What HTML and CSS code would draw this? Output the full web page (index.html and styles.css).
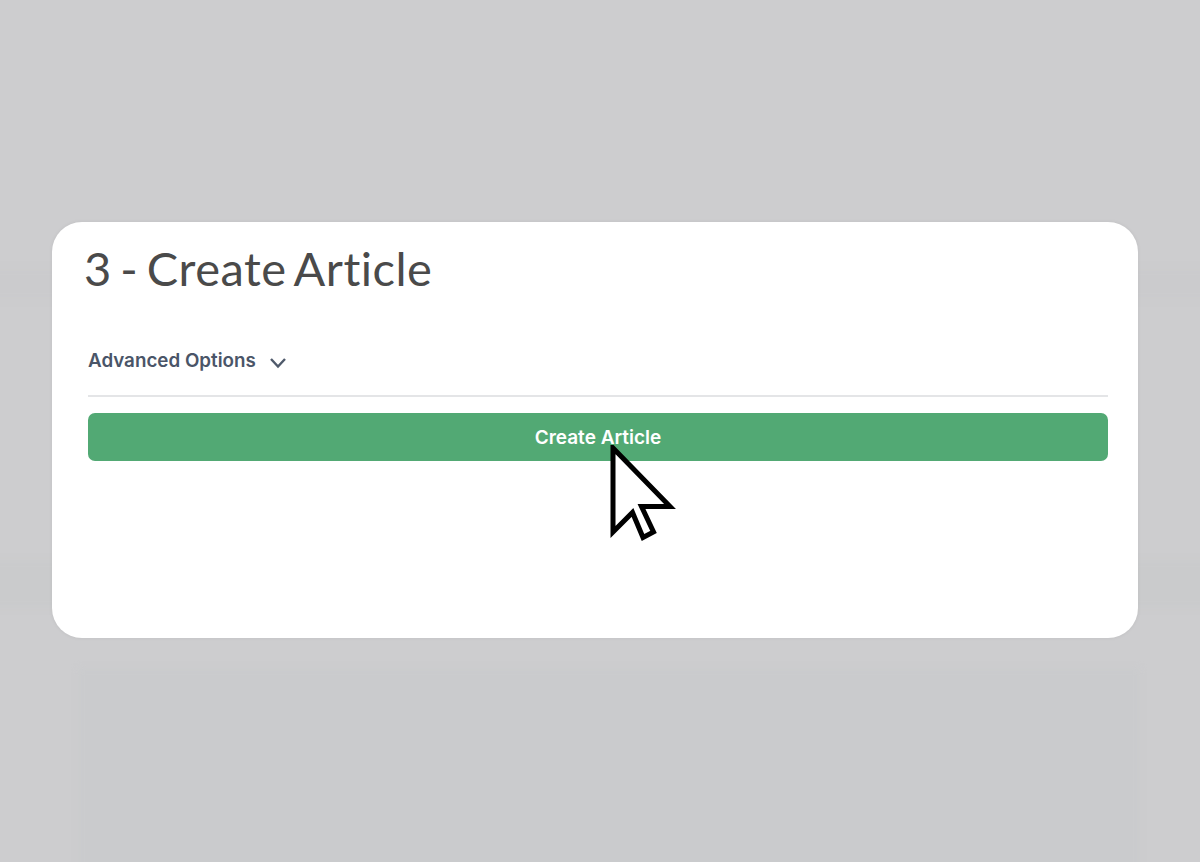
FILE: index.html
```html
<!DOCTYPE html>
<html lang="en">
<head>
<meta charset="utf-8">
<title>Create Article</title>
<link rel="stylesheet" href="styles.css">
</head>
<body>
<div class="ghost ghost-top"></div>
<div class="ghost ghost-mid"></div>
<div class="ghost ghost-bottom"></div>
<main class="card">
  <h1 class="title">3 - Create Article</h1>
  <section class="form">
    <button class="advanced" type="button">
      <span>Advanced Options</span>
      <svg class="chevron" viewBox="0 0 18 12" width="18" height="12" aria-hidden="true"><path d="M2 2 9 9.500 16 2" fill="none" stroke="#4f5a6b" stroke-width="2.400"/></svg>
    </button>
    <hr class="rule">
    <button class="submit" type="button">Create Article</button>
  </section>
  <svg class="cursor" viewBox="0 0 66 96" width="66" height="96" aria-hidden="true">
    <path d="M3 3 V87 L22.500 67.500 L33 92.500 L43.500 87 L31.500 61.500 H60 Z" fill="#fff" stroke="#000" stroke-width="5" stroke-linejoin="miter"/>
  </svg>
</main>
</body>
</html>
```
FILE: styles.css
```css
* { box-sizing: border-box; }
html, body { margin: 0; height: 100%; }
body {
  position: relative;
  height: 862px;
  overflow: hidden;
  padding: 222px 62px 0 52px;
  background: #cdcdcf;
  font-family: Inter, "Liberation Sans", sans-serif;
}
.ghost { position: absolute; filter: blur(3px); }
.ghost-top { left: -10px; right: -10px; top: 268px; height: 32px; background: #cbcbcd; }
.ghost-mid { left: -10px; right: -10px; top: 560px; height: 48px; background: #cacbcc; }
.ghost-bottom { left: 78px; right: 60px; top: 668px; bottom: -10px; background: #cacbcd; }
.card {
  position: relative;
  height: 416px;
  background: #fff;
  border-radius: 30px;
  box-shadow: 0 0 4px rgba(0, 0, 0, .06);
  padding: 15px 30px 0 32px;
}
.title {
  margin: 0;
  font-family: Lato, sans-serif;
  font-weight: 400;
  font-size: 47px;
  font-variant-ligatures: none;
  letter-spacing: .5px;
  word-spacing: -4px;
  line-height: 62px;
  color: #4a4a4a;
}
.form { padding: 46px 0 0 4px; }
.advanced {
  display: flex;
  align-items: center;
  gap: 13px;
  padding: 0;
  border: 0;
  background: none;
  font: 600 18.800px/32px Inter, sans-serif;
  color: #4a5568;
}
.chevron { margin-top: 4px; }
.rule {
  margin: 18px 0 16px;
  border: 0;
  height: 2px;
  background: #e4e5e7;
}
.submit {
  display: block;
  width: 100%;
  height: 48px;
  padding: 1px 0 0;
  border: 0;
  border-radius: 7px;
  background: #52a974;
  color: #fff;
  font: 600 19px/1 Inter, sans-serif;
}
.cursor { position: absolute; left: 558px; top: 223px; }
```
